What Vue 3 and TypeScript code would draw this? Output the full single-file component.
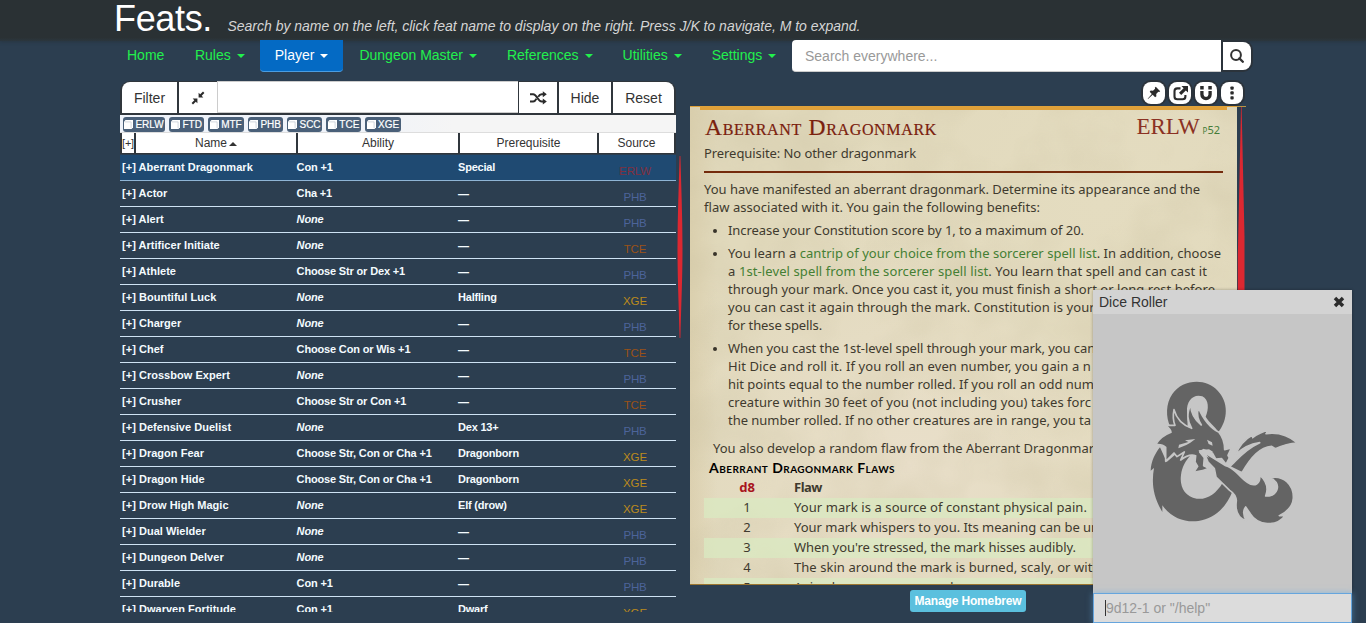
<script setup lang="ts">
import type { Directive } from 'vue'

interface Feat { name: string; ability: string; pre: string; src: string }

const nav: string[] = ['Home', 'Rules', 'Player', 'Dungeon Master', 'References', 'Utilities', 'Settings']
const sources: string[] = ['ERLW', 'FTD', 'MTF', 'PHB', 'SCC', 'TCE', 'XGE']

const raw: string[][] = [
  ['Aberrant Dragonmark', 'Con +1', 'Special', 'ERLW'],
  ['Actor', 'Cha +1', '—', 'PHB'],
  ['Alert', 'None', '—', 'PHB'],
  ['Artificer Initiate', 'None', '—', 'TCE'],
  ['Athlete', 'Choose Str or Dex +1', '—', 'PHB'],
  ['Bountiful Luck', 'None', 'Halfling', 'XGE'],
  ['Charger', 'None', '—', 'PHB'],
  ['Chef', 'Choose Con or Wis +1', '—', 'TCE'],
  ['Crossbow Expert', 'None', '—', 'PHB'],
  ['Crusher', 'Choose Str or Con +1', '—', 'TCE'],
  ['Defensive Duelist', 'None', 'Dex 13+', 'PHB'],
  ['Dragon Fear', 'Choose Str, Con or Cha +1', 'Dragonborn', 'XGE'],
  ['Dragon Hide', 'Choose Str, Con or Cha +1', 'Dragonborn', 'XGE'],
  ['Drow High Magic', 'None', 'Elf (drow)', 'XGE'],
  ['Dual Wielder', 'None', '—', 'PHB'],
  ['Dungeon Delver', 'None', '—', 'PHB'],
  ['Durable', 'Con +1', '—', 'PHB'],
  ['Dwarven Fortitude', 'Con +1', 'Dwarf', 'XGE'],
]
const feats: Feat[] = raw.map(([name, ability, pre, src]) => ({ name, ability, pre, src }))

const flaws: { text: string; w: number }[] = [
  { text: 'Your mark is a source of constant physical pain.', w: 293 },
  { text: 'Your mark whispers to you. Its meaning can be unclear.', w: 336 },
  { text: "When you're stressed, the mark hisses audibly.", w: 282 },
  { text: 'The skin around the mark is burned, scaly, or withered.', w: 338 },
  { text: 'Animals are uneasy around you.', w: 187 },
]

// Sets the tracking of a line so that it fills its measure.
const vFit: Directive<HTMLElement, number> = {
  mounted(el, binding) {
    const natural = el.getBoundingClientRect().width
    const count = (el.textContent ?? '').length
    if (count > 0) el.style.letterSpacing = `${(binding.value - natural) / count}px`
  },
}
</script>

<template>
  <div class="page">
    <header class="top">
      <h1 v-fit="98">Feats.</h1>
      <p v-fit="633">Search by name on the left, click feat name to display on the right. Press J/K to navigate, M to expand.</p>
    </header>

    <nav class="nav">
      <a v-for="(n, i) in nav" :key="n" class="nav-item" :class="{ active: n === 'Player' }">
        {{ n }}<i v-if="i > 0" class="caret"></i>
      </a>
      <div class="omni">Search everywhere...</div>
      <button class="omni-btn">
        <svg width="14" height="14" viewBox="0 0 14 14"><circle cx="6" cy="6" r="4.9" fill="none" stroke="#333" stroke-width="2" /><path d="M9.400 9.400 12.800 12.800" stroke="#333" stroke-width="2.300" stroke-linecap="round" /></svg>
      </button>
    </nav>

    <main class="main">
      <section class="left">
        <div class="filter">
          <button class="b-filter">Filter</button>
          <button class="b-min">
            <svg width="14" height="14" viewBox="0 0 14 14" fill="#2b2b2b"><path d="M7.600 6.400V1.800L9.200 3.200 12 .6 13.400 2 10.700 4.800l1.600 1.600zM6.400 7.600v4.600L4.800 10.800 2 13.400.6 12l2.700-2.800-1.600-1.600z" /></svg>
          </button>
          <div class="search"></div>
          <button class="b-shuf">
            <svg width="17" height="14" viewBox="0 0 17 14"><path d="M0 3.200h3.200c3.600 0 4.600 7.300 8.500 7.300h1.600M0 10.500h3.200c1.500 0 2.400-1.200 3.200-2.700M8.200 5.700c.9-1.500 1.900-2.500 3.500-2.500h1.600" fill="none" stroke="#2b2b2b" stroke-width="2" /><path d="M12.800.2 16.800 3.200l-4 3zM12.800 7.500l4 3-4 3z" fill="#2b2b2b" /></svg>
          </button>
          <button class="b-hide">Hide</button>
          <button class="b-reset">Reset</button>
        </div>

        <div class="pills">
          <span v-for="s in sources" :key="s" class="pill" :class="{ wide: s === 'ERLW' }">
            <svg width="9" height="9" viewBox="0 0 9 9"><path d="M1.500 0H9v7.500L7.500 9H0V1.500z" fill="#fff" /><path d="M.8 1.900h6.300v6.300" fill="none" stroke="#b4bec8" stroke-width=".6" /></svg>{{ s }}
          </span>
        </div>

        <div class="cols thead">
          <span class="plus">[+]</span><span>Name<i class="up"></i></span><span>Ability</span><span>Prerequisite</span><span>Source</span>
        </div>

        <div class="rows">
          <div v-for="(f, i) in feats" :key="f.name" class="row" :class="{ sel: i === 0 }">
            <span class="name">[+] {{ f.name }}</span>
            <span class="abil" :class="{ none: f.ability === 'None' }">{{ f.ability }}</span>
            <span class="pre" :class="{ dash: f.pre === '—' }">{{ f.pre }}</span>
            <span class="src" :class="f.src.toLowerCase()">{{ f.src }}</span>
          </div>
        </div>
      </section>

      <svg class="spike" width="8" height="182" viewBox="0 0 8 182"><path d="M3.600 0h.8C5.200 30 6.500 60 6.500 92s-1.400 60-2.100 90h-.8C2.900 152 1.500 124 1.500 92S2.800 30 3.600 0z" fill="#dc2831" /></svg>

      <section class="right">
        <div class="tools">
          <button><svg width="14" height="14" viewBox="0 0 14 14" fill="#2b2b2b"><path d="M8.800.8 13.200 5.200l-1 .8-.9-.3-2.100 2.200.2 2.300-1.300 1L5.700 8.800 1 13 .7 12.800 4.800 7.900 2.700 5.800l1-1.200 2.300.2 2.100-2.100-.3-1z" /></svg></button>
          <button><svg width="15" height="15" viewBox="0 0 15 15"><path d="M7.500 2.400H4.300a2.800 2.800 0 0 0-2.800 2.800v5.300a2.800 2.800 0 0 0 2.800 2.800h5.300a2.800 2.800 0 0 0 2.800-2.800V9" fill="none" stroke="#2b2b2b" stroke-width="2.100" /><path d="M8.500 0H15v6.500L12.800 4.400 8.200 9 6 6.800l4.600-4.600z" fill="#2b2b2b" /></svg></button>
          <button><svg width="14" height="15" viewBox="0 0 14 15"><path d="M2.900 5v3.500a4.100 4.100 0 0 0 8.200 0V5" fill="none" stroke="#2b2b2b" stroke-width="3.300" /><path d="M1.200 0h3.500v3.600H1.200zM9.300 0h3.500v3.600H9.300z" fill="#2b2b2b" /></svg></button>
          <button><svg width="4" height="14" viewBox="0 0 4 14" fill="#2b2b2b"><rect x=".4" y=".4" width="3.300" height="3.300" rx=".9" /><rect x=".4" y="5.300" width="3.300" height="3.300" rx=".9" /><rect x=".4" y="10.200" width="3.300" height="3.300" rx=".9" /></svg></button>
        </div>

        <div class="sheet-wrap">
          <article class="sheet">
            <svg class="paper" width="547" height="479">
              <filter id="grain" x="0" y="0" width="100%" height="100%">
                <feTurbulence type="fractalNoise" baseFrequency="0.014 0.014" numOctaves="3" seed="8" />
                <feColorMatrix values="0 0 0 0 .6  0 0 0 0 .54  0 0 0 0 .36  1.6 0 0 0 -.6" />
              </filter>
              <rect width="547" height="479" filter="url(#grain)" />
            </svg>
            <div class="bar"></div>
            <div class="content">
              <div class="title"><h2 v-fit="232">Aberrant Dragonmark</h2><span class="ref"><b v-fit="63">ERLW</b><em><small>P</small>52</em></span></div>
              <p class="ln"><span v-fit="212">Prerequisite: No other dragonmark</span></p>
              <hr>
              <p class="ln"><span v-fit="496">You have manifested an aberrant dragonmark. Determine its appearance and the</span></p>
              <p class="ln"><span v-fit="336">flaw associated with it. You gain the following benefits:</span></p>
              <ul>
                <li><p class="ln"><span v-fit="356">Increase your Constitution score by 1, to a maximum of 20.</span></p></li>
                <li>
                  <p class="ln"><span v-fit="493">You learn a <a>cantrip of your choice from the sorcerer spell list</a>. In addition, choose</span></p>
                  <p class="ln"><span v-fit="479">a <a>1st-level spell from the sorcerer spell list</a>. You learn that spell and can cast it</span></p>
                  <p class="ln"><span v-fit="487">through your mark. Once you cast it, you must finish a short or long rest before</span></p>
                  <p class="ln"><span v-fit="484">you can cast it again through the mark. Constitution is your spellcasting ability</span></p>
                  <p class="ln"><span v-fit="94">for these spells.</span></p>
                </li>
                <li>
                  <p class="ln"><span v-fit="488">When you cast the 1st-level spell through your mark, you can expend one of your</span></p>
                  <p class="ln"><span v-fit="363">Hit Dice and roll it. If you roll an even number, you gain a n</span></p>
                  <p class="ln"><span v-fit="366">hit points equal to the number rolled. If you roll an odd num</span></p>
                  <p class="ln"><span v-fit="363">creature within 30 feet of you (not including you) takes forc</span></p>
                  <p class="ln"><span v-fit="363">the number rolled. If no other creatures are in range, you ta</span></p>
                </li>
              </ul>
              <p class="ln after"><span v-fit="388">You also develop a random flaw from the Aberrant Dragonmark</span></p>
              <h3><span v-fit="186">Aberrant Dragonmark Flaws</span></h3>
              <div class="trow thd"><b class="die">d8</b><div><b v-fit="28">Flaw</b></div></div>
              <div v-for="(f, i) in flaws" :key="i" class="trow" :class="{ odd: i % 2 === 0 }"><span>{{ i + 1 }}</span><div><span v-fit="f.w">{{ f.text }}</span></div></div>
            </div>
          </article>
          <svg class="spike2" width="9" height="479" viewBox="0 0 9 479"><path d="M0 0h9v1H0z" fill="#b99545" /><path d="M4 1h.6L7.500 130V479H.8V150z" fill="#dc2831" /></svg>
        </div>
        <button class="brew">Manage Homebrew</button>
      </section>
    </main>

    <aside class="dice">
      <div class="dice-head"><span>Dice Roller</span><svg width="12" height="12" viewBox="0 0 12 12"><path d="M2 2l8 8M10 2l-8 8" stroke="#2b2b2b" stroke-width="3.500" /></svg></div>
      <div class="dice-body">
        <svg class="amp" width="170" height="165" viewBox="0 0 510 495" fill="#646464">
          <path d="M106 170C92 142 92 100 112 72C142 28 212 22 248 62C281 96 280 148 250 186C238 166 222 158 212 140C222 118 222 88 202 79C176 70 154 92 156 124L158 170L130 158Z" />
          <path d="M75 232C60 250 48 275 47 302L57 294C50 335 52 375 82 426L82 406C110 445 150 458 190 453C240 446 275 410 293 362L263 338C243 372 215 390 185 386C150 380 133 350 138 315C141 290 152 272 168 254L130 246L95 276Z" />
          <g stroke="#c6c6c6" stroke-width="5" stroke-linejoin="round">
            <path d="M117 119C113 139 113 150 120 166L90 166C103 174 107 180 108 187C92 193 74 203 62 224C78 222 86 226 92 232L92 274L117 249L126 260L148 246L137 270C152 258 170 253 182 257L180 276L188 289L176 308C194 302 210 303 220 294L206 287L208 263L194 246L206 239L232 249L242 267L260 266L273 283L283 264L279 256L289 234L269 239C269 219 264 201 252 187C229 176 203 148 190 111C184 138 190 150 199 165C180 150 168 133 167 104C155 131 156 150 170 175C146 166 126 151 117 119Z" />
            <path d="M302 254C312 226 330 207 357 192L353 203C366 193 380 185 402 180L393 191C432 185 463 198 488 219C460 220 442 226 421 236L410 229C375 232 349 260 321 308L284 290C303 275 322 242 374 218C346 222 320 236 302 254Z" />
            <path d="M207 247L235 264L270 286C300 292 309 319 337 337C359 352 377 342 374 315C395 334 401 356 392 378C426 379 443 345 407 323C446 315 477 345 475 385C473 410 456 426 433 437L450 437C425 471 369 468 345 430L332 411C324 421 324 435 334 453C309 444 300 420 304 392C303 376 295 368 284 361L243 321L238 296L219 276Z" />
          </g>
          <path d="M216 209L231 217L233 227L221 222Z" fill="#c6c6c6" />
          <path d="M132 224L160 216L150 211L181 207L166 218L154 225L130 235ZM190 241L222 238L234 245L214 252L222 264L206 256Z" fill="#c6c6c6" />
        </svg>
      </div>
      <div class="dice-in"><i></i>9d12-1 or "/help"</div>
    </aside>
  </div>
</template>

<style>
body { background: #2c3e50; overflow: hidden; }
</style>

<style scoped>
* { box-sizing: border-box; }
.page { width: 1366px; height: 623px; overflow: hidden; position: relative; background: #2c3e50; font: 14px/20px "Liberation Sans", Arial, sans-serif; color: #333; }
h1, h2, h3, p, ul, hr { margin: 0; padding: 0; }
button { border: 0; margin: 0; padding: 0; background: #fff; color: #333; font: inherit; display: flex; align-items: center; justify-content: center; }
.top { height: 41px; background: linear-gradient(#2a3134, #2a3134 92%, #2b363e); display: flex; padding-left: 114px; white-space: pre; box-shadow: 0 1px 3px rgba(35, 45, 50, .5); }
.top h1 { font-weight: 400; font-size: 36px; line-height: 38px; color: #fff; }
.top p { margin-left: 15.500px; padding-top: 16px; font-style: italic; color: #d5d5d5; align-self: flex-start; }

.nav { height: 33px; margin-top: -1px; padding-left: 112px; display: flex; position: relative; }
.nav-item { display: flex; height: 32px; padding: 0 15px; line-height: 31px; color: #22f04d; white-space: nowrap; }
.nav-item:first-child { margin-right: .6px; }
.nav-item.active { background: #046ac4; color: #fff; border-bottom: 1px solid #4b9ce0; border-radius: 0 0 4px 4px; margin-right: 1px; }
.caret { margin: 14px 0 0 6px; width: 8px; height: 4px; border: 4px solid transparent; border-top-color: currentColor; border-bottom: 0; }
.omni { margin-left: auto; width: 429px; height: 32px; padding-left: 13px; line-height: 32px; background: #fff; border-radius: 4px 0 0 4px; color: #999; border-bottom: 1px solid #ccc; }
.omni-btn { margin: 2px 115px 0 2px; width: 28px; height: 28px; border-radius: 0 8px 8px 0; box-shadow: 0 0 0 2px #2b333b; }

.main { display: flex; padding-left: 120px; padding-top: 8px; height: 550px; }
.left { width: 556px; }
.filter { height: 34px; display: grid; grid-template-columns: 55px 38px 298px 38px 52px 61px; column-gap: 2px; padding: 1px 2px 2px; background: #30363c; border-radius: 10px 10px 0 0; font-size: 14px; }
.filter button { height: 31px; }
.filter .search { margin: -1px -1px 0 -2px; background: #fff; border-left: 1px solid #ccc; border-top: 1px solid #ccc; border-bottom: 1px solid #ccc; height: 32px; }
.filter .b-filter { border-radius: 8px 0 0 0; }
.filter .b-reset { border-radius: 0 8px 0 0; }
.pills { height: 18px; background: linear-gradient(90deg, #eff3fa 40%, #f5f5f5 60%); padding: 2px 3px 0; display: flex; gap: 4px; border-bottom: 1px solid #ddd; }
.pill { width: 35.300px; height: 14.500px; border-radius: 3px; background: #4a6079; color: #fff; font-size: 10px; line-height: 15px; display: flex; align-items: center; justify-content: center; gap: 2px; -webkit-text-stroke: .2px #fff; }
.pill svg { flex: none; }
.pill.wide { width: 42px; }
.thead { display: grid; grid-template-columns: 12px 160px 160px 137px 75px; column-gap: 2px; padding: 0 2px; height: 21px; background: #30363c; font-size: 12px; line-height: 20px; text-align: center; }
.thead span { background: #fff; height: 20px; display: block; }
.thead .plus { font-size: 11px; overflow: visible; white-space: nowrap; letter-spacing: -.2px; }
.up { display: inline-block; border: 4px solid transparent; border-bottom-color: #333; border-top: 0; margin: 0 0 1px 2px; }
.rows { height: 458px; overflow: hidden; padding-top: 1px; }
.row { display: grid; grid-template-columns: 176px 161px 149px 70px; height: 26px; line-height: 25px; border-bottom: 1px solid #cfe2f3; color: #f4fbff; font-size: 11px; font-weight: 700; white-space: nowrap; }
.row.sel { background: #1f4a72; border-color: #8fb4d5; }
.name { padding-left: 2px; letter-spacing: .03px; }
.abil { padding-left: .6px; letter-spacing: -.16px; }
.abil.none { font-style: italic; }
.src { font-weight: 400; font-size: 11.500px; text-align: center; padding: 4px 13px 0 0; width: 85px; margin-left: -7px; letter-spacing: -.15px; }
.pre { padding-left: 1px; letter-spacing: -.2px; }
.dash { padding-top: 1px; }
.phb { color: #4c649a; }
.tce { color: #9b5216; }
.xge { color: #bb8b1c; }
.erlw { color: #81303f; }

.spike { margin: 75px 0 0 0; width: 8px; flex: none; }
.right { width: 556px; margin-left: 6px; }
.tools { height: 25px; display: flex; gap: 4px; justify-content: flex-end; padding: 1px 3px 0 0; }
.tools button { width: 22px; height: 22px; border-radius: 8px; box-shadow: 0 0 0 2px #2b333b; }
.sheet-wrap { display: flex; height: 479px; }
.sheet { width: 547px; height: 479px; overflow: hidden; position: relative; border-top: 1px solid #e0a23a; border-bottom: 1px solid #9c7630;
  background: linear-gradient(90deg, rgba(190, 165, 110, .18), transparent 5%), radial-gradient(circle at 75% 20%, #e4dcc0, transparent 50%), radial-gradient(circle at 40% 75%, #e9dfca, transparent 55%), #e1d9bc; }
.paper { position: absolute; left: 0; top: 0; opacity: .45; }
.bar { height: 3px; width: 527px; margin-left: 10px; background: #e0a039; position: relative; }
.content { position: relative; padding: 0 14px; font-family: "Noto Sans", "Open Sans", sans-serif; font-size: 13px; color: #403a2e; white-space: nowrap; }
.title { height: 34px; display: flex; justify-content: space-between; font-family: "Liberation Serif", serif; color: #7a200d; }
.title h2 { font-size: 23.500px; line-height: 34px; font-weight: 400; font-variant: small-caps; align-self: flex-start; -webkit-text-stroke: .2px #7a200d; margin-left: 1px; }
.ref { display: flex; padding-right: 3px; }
.ref b { font-size: 23px; line-height: 33px; font-weight: 400; color: #8b3123; align-self: flex-start; }
.ref em { font: 11px/40px "Noto Sans", sans-serif; color: #447c38; margin-left: 3px; }
.ref small { font-size: 8px; }
.ln { height: 18px; line-height: 18px; }
.ln > span, h3 > span, .trow div > span, .trow div > b { display: inline-block; }
hr { height: 2px; border: 0; background: #742b0c; margin: 9px 0 7px; }
ul { list-style: none; }
li { margin-top: 5px; padding-left: 24px; position: relative; }
li::before { content: ""; position: absolute; left: 9px; top: 8px; width: 4px; height: 4px; border-radius: 50%; background: #38332a; }
a { color: #447f34; }
.after { margin-top: 10px; padding-left: 9px; }
h3 { margin: 2px 0 0 5px; height: 19px; font: 700 14px/18px "Lato", sans-serif; font-variant: small-caps; color: #000; }
.trow { height: 20px; line-height: 19px; display: grid; grid-template-columns: 86px 1fr; column-gap: 4px; }
.trow > :first-child { text-align: center; }
.trow.odd { background: rgba(218, 234, 194, .75); }
.die { color: #a8141c; }
.spike2 { flex: none; }
.brew { margin: 5px 0 0 220px; width: 116px; height: 22px; background: #5bc0de; color: #fff; font-size: 12px; font-weight: 700; letter-spacing: -.15px; border-radius: 3px; }

.dice { position: absolute; left: 1093px; top: 290px; width: 259px; height: 333px; display: flex; flex-direction: column; background: #c6c6c6; box-shadow: 0 0 3px rgba(0, 0, 0, .3); }
.dice-head { height: 24px; background: #d3d3d3; display: flex; justify-content: space-between; align-items: center; padding: 0 7px 0 6px; }
.dice-body { flex: 1; padding: 56px 0 0 42px; }
.amp { display: block; }
.dice-in { height: 30px; border: 1px solid #66a5dd; background: #dcdcdc; color: #999; line-height: 29px; padding-left: 11px; display: flex; align-items: center; box-shadow: 0 0 6px rgba(102, 175, 233, .6); }
.dice-in i { width: 1px; height: 16px; background: #333; }
</style>
